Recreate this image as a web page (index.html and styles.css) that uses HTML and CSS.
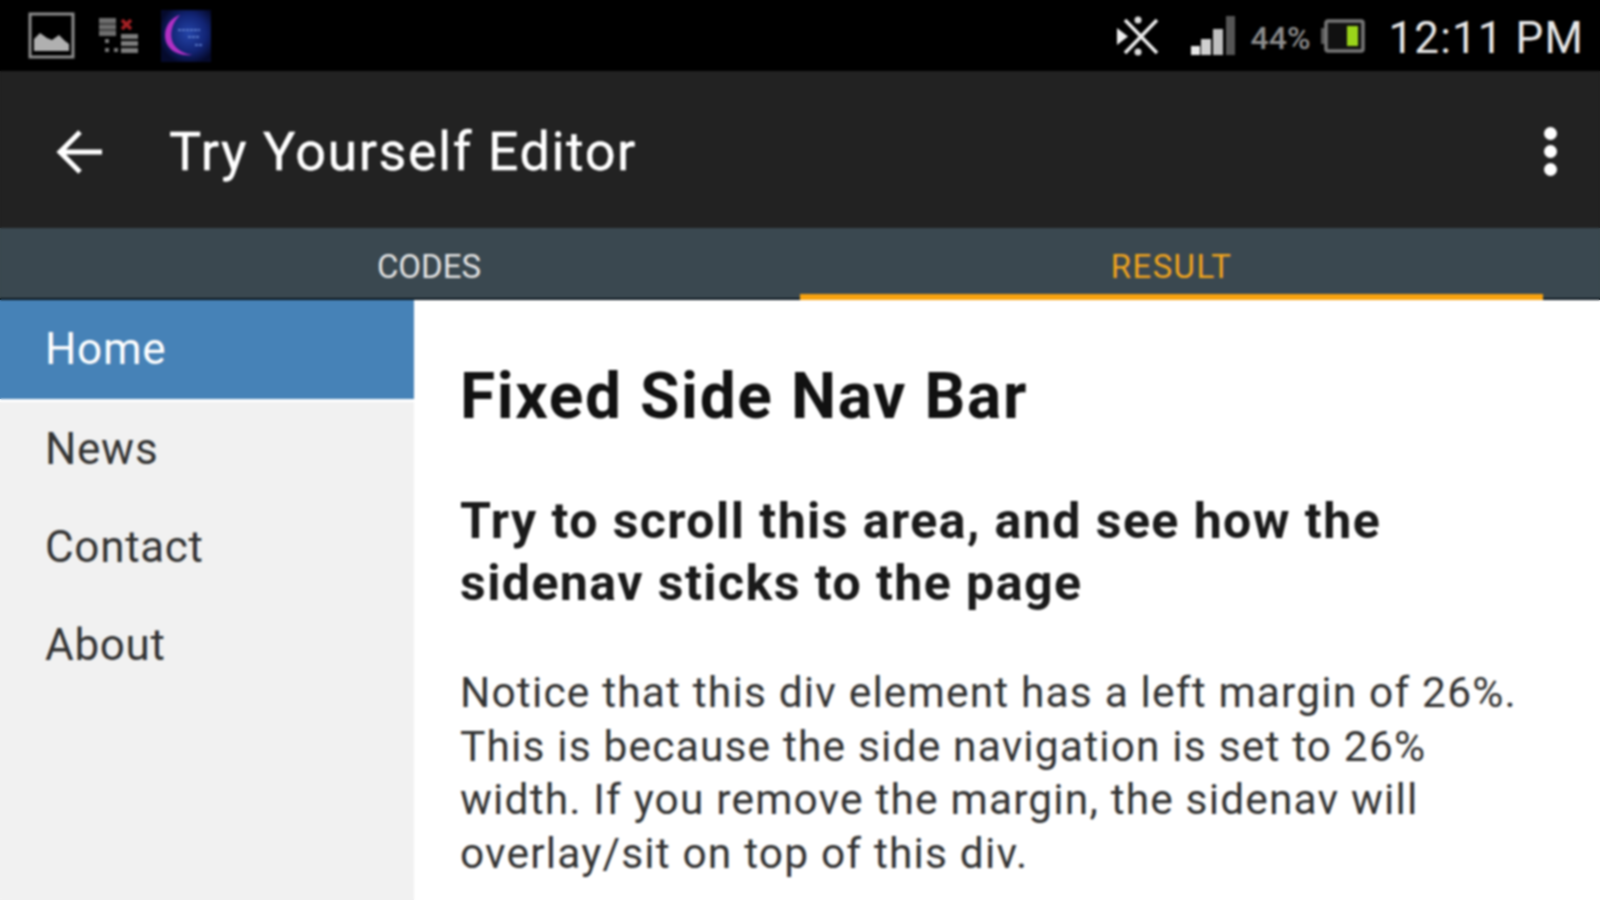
FILE: index.html
```html
<!DOCTYPE html>
<html>
<head>
    <title>Try Yourself Editor</title>
    <link rel="stylesheet" href="styles.css">
</head>
<body>
    <div class="status-bar">
        <div class="status-left">
            <svg class="icon-picture" width="48" height="48" viewBox="0 0 48 48">
                <rect x="2" y="2" width="43" height="43" fill="none" stroke="#8c8c8c" stroke-width="3"/>
                <path d="M6 39V27l6-6 7 5 5 2 7-5 6 6 4 3v7z" fill="#b0b0b0"/>
            </svg>
            <svg class="icon-sync" width="42" height="38" viewBox="0 0 42 38">
                <rect x="1" y="1" width="17" height="18" fill="#6e6e6e"/>
                <path d="M1 7h17M1 13h17" stroke="#333" stroke-width="1.5"/>
                <path d="M24 3l9 9M33 3l-9 9" stroke="#a32024" stroke-width="3.5"/>
                <rect x="23" y="17" width="17" height="5" fill="#7c7c7c"/>
                <rect x="23" y="24" width="17" height="5" fill="#7c7c7c"/>
                <rect x="23" y="31" width="17" height="5" fill="#7c7c7c"/>
                <path d="M7 22h4v4H7zM7 31h4v4H7zM16 31h4v4h-4z" fill="#777"/>
            </svg>
            <svg class="icon-app" width="50" height="52" viewBox="0 0 50 52">
                <defs>
                    <radialGradient id="appGlow" cx="55%" cy="45%" r="60%">
                        <stop offset="0" stop-color="#2444a8"/>
                        <stop offset="0.6" stop-color="#122474"/>
                        <stop offset="1" stop-color="#050a2c"/>
                    </radialGradient>
                </defs>
                <rect width="50" height="52" fill="url(#appGlow)"/>
                <path d="M19 5C6 9 1 23 6 34c4 8 13 12 26 11-9-1-16-5-20-12-4-9-1-20 7-28z" fill="#b030c4"/>
                <path d="M17 20h22M27 27h12M34 35h7" stroke="#5674c4" stroke-width="2" stroke-dasharray="3 1"/>
            </svg>
        </div>
        <div class="status-right">
            <svg class="icon-bt" width="44" height="42" viewBox="0 0 44 42">
                <path d="M8 5l32 33M40 5L8 38" stroke="#eee" stroke-width="3.5"/>
                <path d="M0 13v17l11-8.500z" fill="#eee"/>
                <circle cx="21" cy="5" r="3.500" fill="#ddd"/>
                <circle cx="21" cy="37" r="3.500" fill="#ddd"/>
            </svg>
            <svg class="icon-signal" width="46" height="42" viewBox="0 0 46 42">
                <rect x="1" y="31" width="9" height="9" fill="#e8e8e8"/>
                <rect x="11" y="24" width="10" height="16" fill="#d0d0d0"/>
                <rect x="23" y="14" width="10" height="26" fill="#c0c0c0"/>
                <rect x="36" y="1" width="9" height="39" fill="#555"/>
            </svg>
            <span class="battery-pct">44%</span>
            <svg class="icon-battery" width="44" height="34" viewBox="0 0 44 34">
                <rect x="0" y="9" width="4" height="16" fill="#555"/>
                <rect x="5" y="2" width="37" height="30" rx="2" fill="#111" stroke="#777" stroke-width="3.500"/>
                <rect x="26" y="7" width="11" height="20" fill="#9ad41a"/>
            </svg>
            <span class="clock">12:11 PM</span>
        </div>
    </div>

    <div class="action-bar">
        <svg class="icon-back" width="48" height="48" viewBox="0 0 48 48">
            <path d="M46 24H4M24 4L4 24l20 20" fill="none" stroke="#fff" stroke-width="5"/>
        </svg>
        <div class="action-title">Try Yourself Editor</div>
        <div class="overflow-menu">
            <span></span>
            <span></span>
            <span></span>
        </div>
    </div>

    <div class="tabs">
        <div class="tab">CODES</div>
        <div class="tab active">RESULT</div>
    </div>

    <div class="result">
        <div class="sidenav">
            <a class="active">Home</a>
            <a>News</a>
            <a>Contact</a>
            <a>About</a>
        </div>
        <div class="main">
            <h1>Fixed Side Nav Bar</h1>
            <h2>Try to scroll this area, and see how the sidenav sticks to the page</h2>
            <p>Notice that this div element has a left margin of 26%. This is because the side navigation is set to 26% width. If you remove the margin, the sidenav will overlay/sit on top of this div.</p>
        </div>
    </div>
</body>
</html>
```

FILE: styles.css
```css
html, body {
    height: 100%;
}
body {
    margin: 0;
    overflow: hidden;
    background: #fff;
    font-family: Roboto, sans-serif;
    display: flex;
    flex-direction: column;
}
/* Soft, upscaled look of the phone capture */
body::after {
    content: "";
    position: fixed;
    inset: 0;
    backdrop-filter: blur(0.9px);
}
.status-bar {
    height: 71px;
    flex: none;
    background: #000;
    display: flex;
    justify-content: space-between;
    align-items: center;
}
.status-left {
    display: flex;
    align-items: center;
    padding-left: 28px;
}
.icon-sync {
    margin-left: 22px;
}
.icon-app {
    margin-left: 21px;
}
.status-right {
    display: flex;
    align-items: center;
    padding-right: 16px;
    padding-top: 4px;
}
.icon-signal {
    margin-left: 29px;
    margin-top: -4px;
}
.icon-bt {
    margin-top: -4px;
}
.battery-pct {
    margin-left: 15px;
    color: #8c8c8c;
    font-size: 32px;
    font-weight: 500;
}
.icon-battery {
    margin-left: 10px;
    margin-top: -4px;
}
.clock {
    margin-left: 24px;
    color: #e8e8e8;
    font-size: 44px;
    letter-spacing: 1.1px;
}
.action-bar {
    height: 157px;
    flex: none;
    background: #222;
    display: flex;
    align-items: center;
    padding: 4px 43px 0 56px;
    box-sizing: border-box;
    color: #fff;
}
.action-title {
    margin-left: 65px;
    font-size: 54px;
    letter-spacing: 1.5px;
    -webkit-text-stroke: 0.4px #fff;
    flex: 1;
}
.overflow-menu {
    display: flex;
    flex-direction: column;
    gap: 5px;
}
.overflow-menu span {
    width: 13px;
    height: 13px;
    border-radius: 50%;
    background: #fff;
}
.tabs {
    height: 72px;
    flex: none;
    background: #3a4850;
    border-bottom: 2px solid #0c1820;
    box-sizing: border-box;
    display: grid;
    grid-template-columns: 800px 743px;
    font-size: 33px;
    color: #e4e4e4;
}
.tab {
    text-align: center;
    padding-left: 58px;
    line-height: 78px;
    box-sizing: border-box;
    height: 72px;
}
.tab.active {
    color: #f0a41e;
    padding-left: 0;
    letter-spacing: 1.4px;
    border-bottom: 6px solid #f9a30f;
}
.result {
    flex: 1;
    display: flex;
    min-height: 0;
}
.sidenav {
    width: 414px;
    flex: none;
    background: #f1f1f1;
    font-size: 44px;
    letter-spacing: 0.7px;
}
.sidenav a {
    display: block;
    height: 98px;
    line-height: 98px;
    padding-left: 45px;
    color: #333;
}
.sidenav a.active {
    background: #4682b7;
    color: #fff;
    height: 99px;
    margin-bottom: 1px;
    box-shadow: 0 3px 0 #fff;
}
.main {
    flex: 1;
    padding: 0 60px 0 46px;
    color: #222;
}
h1 {
    margin: 60px 0 0;
    font-size: 64px;
    line-height: 74px;
    letter-spacing: 1.6px;
    font-weight: 700;
    color: #111;
}
h2 {
    margin: 56px 0 0;
    font-size: 50px;
    line-height: 62px;
    letter-spacing: 1.45px;
    font-weight: 700;
    color: #1a1a1a;
}
p {
    margin: 52px 0 0;
    font-size: 42.5px;
    line-height: 53.6px;
    letter-spacing: 1.15px;
    color: #333;
}
```
